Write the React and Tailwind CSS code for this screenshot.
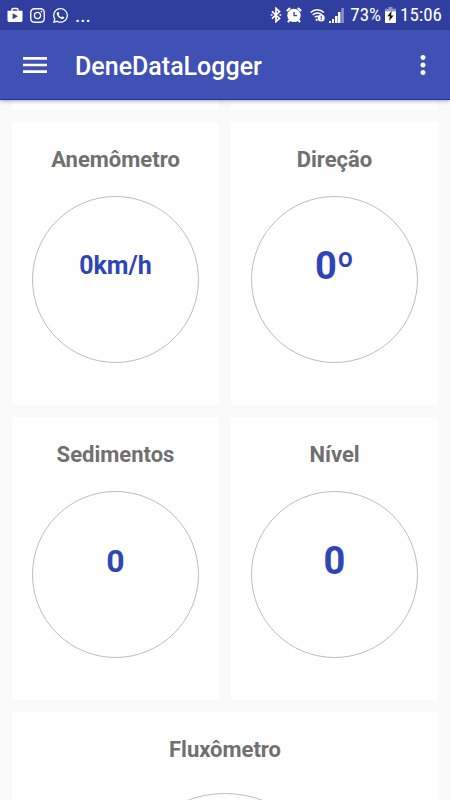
import React from 'react';
import { FaInstagram, FaWhatsapp } from 'react-icons/fa';
import { MdMenu, MdMoreVert } from 'react-icons/md';

const PlayStoreIcon = () => (
    <svg width="16" height="16" viewBox="0 0 16 16" fill="none">
        <path d="M5 5V2.6C5 1.9 5.5 1.5 6.1 1.5h3.8c.6 0 1.1.4 1.1 1.1V5" stroke="#fff" strokeWidth="1.4" />
        <path d="M.5 3.8h15v9.4c0 1.2-.7 1.8-1.8 1.8H2.3C1.2 15 .5 14.4.5 13.2z" fill="#fff" />
        <path d="M5.6 6.2v6L11 9.2z" fill="#303f9f" />
    </svg>
);

const BluetoothIcon = () => (
    <svg width="12" height="16" viewBox="0 0 12 16" fill="none" stroke="#fff" strokeWidth="1.7">
        <path d="M2 4.3l7.5 7.2L6 14.6V1.4l3.5 3.1L2 11.7" />
        <path d="M.8 8h1.7M9.5 8h1.7" />
    </svg>
);

const AlarmIcon = () => (
    <svg width="16" height="16" viewBox="0 0 16 16" fill="none">
        <path d="M.8 4L4.2 1M15.2 4l-3.4-3M3.5 13.2L2 15.2M12.5 13.2l1.5 2" stroke="#fff" strokeWidth="2" />
        <circle cx="8" cy="8.4" r="6.7" fill="#fff" />
        <path d="M8 5v3.7h3" stroke="#303f9f" strokeWidth="1.3" />
    </svg>
);

const WifiIcon = () => (
    <svg width="15" height="14" viewBox="0 0 15 14" fill="none">
        <path d="M.7 4.5c3.6-3.7 9.6-3.7 13.2 0M2.7 7c2.5-2.5 6.6-2.6 9.3-.2M4.7 9.3c1-1 2.3-1.3 3.5-1.1" stroke="#fff" strokeWidth="1.5" />
        <path d="M6 11.2l1.3 1.5" stroke="#fff" strokeWidth="1.8" />
        <circle cx="11.2" cy="9.9" r="3.5" fill="#fff" />
        <path d="M11.2 7.8v2.6M11.2 11.1v1.1" stroke="#303f9f" strokeWidth="1.1" />
    </svg>
);

const SignalIcon = () => (
    <svg width="15" height="15" viewBox="0 0 15 15" fill="#fff">
        <rect x="0" y="13" width="2" height="2" />
        <rect x="3" y="11" width="2" height="4" />
        <rect x="6" y="8" width="2.5" height="7" />
        <rect x="9" y="4" width="2.5" height="11" />
        <rect x="12.3" y="0" width="2.5" height="15" opacity="0.45" />
    </svg>
);

const BatteryIcon = () => (
    <svg width="11" height="16" viewBox="0 0 11 16">
        <path d="M3.5 0h4v1.8H11V4.5H0V1.8h3.5z" fill="#8f97cc" />
        <path d="M0 4.3h11V15c0 .6-.4 1-1 1H1c-.6 0-1-.4-1-1z" fill="#fff" />
        <path d="M6.6 3.8L2.4 9.2h2.4L4.2 14 8.6 8.4H6.1z" fill="#111" />
    </svg>
);

const sensors = [
    { name: 'Anemômetro', value: '0km/h', size: 'text-[25px]' },
    { name: 'Direção', value: '0º', size: 'text-[38px]' },
    { name: 'Sedimentos', value: '0', size: 'text-[32px]' },
    { name: 'Nível', value: '0', size: 'text-[38px]' },
];

const CardTitle = ({ children }) => (
    <h2 className="text-center text-[22px] leading-[34px] font-bold text-[#707070]">{children}</h2>
);

const SensorCard = ({ name, value, size }) => (
    <section className="bg-white px-5 pt-[21px] pb-[42px]">
        <CardTitle>{name}</CardTitle>
        <div className="mt-[19px] aspect-square w-full rounded-full border border-[#bdbdbd] flex items-center justify-center pb-7">
            <span className={`${size} leading-10 font-bold text-[#2f45b5]`}>{value}</span>
        </div>
    </section>
);

const App = () => {
    return (
        <div className="h-screen flex flex-col overflow-hidden bg-[#fafafa] font-[Roboto,sans-serif]">
            <div className="h-[30px] shrink-0 bg-[#303f9f] text-white flex items-center justify-between pl-[7px] pr-2">
                <div className="flex items-center gap-1.5">
                    <PlayStoreIcon />
                    <FaInstagram size={17} />
                    <FaWhatsapp size={17} />
                    <span className="text-xl leading-5">...</span>
                </div>
                <div className="flex items-center gap-1">
                    <BluetoothIcon />
                    <AlarmIcon />
                    <span />
                    <WifiIcon />
                    <SignalIcon />
                    <span className="ml-0.5 text-[19px] leading-5 font-['Roboto_Condensed',Roboto,sans-serif]">73%</span>
                    <BatteryIcon />
                    <span className="text-[19px] leading-5 font-['Roboto_Condensed',Roboto,sans-serif]">15:06</span>
                </div>
            </div>

            <header className="z-10 h-[70px] shrink-0 bg-[#3f51b5] border-b border-[#1a36a5] text-white flex items-center pl-[19px] pr-3 shadow-[0_1px_4px_rgba(0,0,0,0.35)]">
                <button aria-label="Menu">
                    <MdMenu size={32} />
                </button>
                <h1 className="ml-6 pt-1 text-[25px] leading-8 font-medium flex-1">DeneDataLogger</h1>
                <button aria-label="Mais opções">
                    <MdMoreVert size={30} />
                </button>
            </header>

            <main className="flex-1 overflow-hidden px-3">
                <div className="grid grid-cols-2 gap-3">
                    <div className="h-[10px] bg-white" />
                    <div className="h-[10px] bg-white" />
                    {sensors.map((sensor) => (
                        <SensorCard key={sensor.name} {...sensor} />
                    ))}
                    <section className="col-span-2 bg-white px-5 pt-[21px]">
                        <CardTitle>Fluxômetro</CardTitle>
                        <div className="mt-[26px] mx-auto aspect-square w-5/9 rounded-full border border-[#bdbdbd]" />
                    </section>
                </div>
            </main>
        </div>
    );
};

export default App;
